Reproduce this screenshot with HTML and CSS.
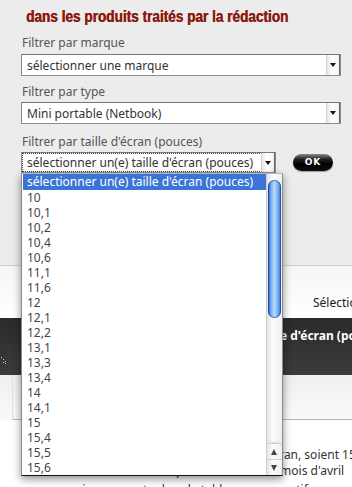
FILE: index.html
```html
<!DOCTYPE html>
<html lang="fr">
<head>
    <meta charset="UTF-8">
    <meta name="viewport" content="width=device-width, initial-scale=1.0">
    <title>Filtrer les produits</title>
    <link rel="stylesheet" href="styles.css">
</head>
<body>
    <div class="page">
        <section class="filters">
            <h2 class="filters-title">dans les produits traités par la rédaction</h2>

            <label class="filter-label label-first">Filtrer par marque</label>
            <div class="select select-wide">
                <span class="select-text">sélectionner une marque</span>
                <span class="select-arrow"></span>
            </div>

            <label class="filter-label">Filtrer par type</label>
            <div class="select select-wide">
                <span class="select-text">Mini portable (Netbook)</span>
                <span class="select-arrow"></span>
            </div>

            <label class="filter-label label-third">Filtrer par taille d'écran (pouces)</label>
            <div class="select-row">
                <div class="select select-short focused">
                    <span class="select-text">sélectionner un(e) taille d'écran (pouces)</span>
                    <span class="select-arrow"></span>
                </div>
                <button class="ok-btn">OK</button>
            </div>
        </section>

        <div class="results-bar"><span>Sélectionner</span></div>

        <div class="table-head">
            <div class="col-first">
                <svg class="grip" width="6" height="7" viewBox="0 0 6 7">
                    <rect x="0" y="0" width="1" height="1" fill="#ccc"/>
                    <rect x="2" y="2" width="1" height="1" fill="#ccc"/>
                    <rect x="4" y="4" width="1" height="1" fill="#ccc"/>
                    <rect x="2" y="5" width="1" height="1" fill="#ccc"/>
                    <rect x="4" y="6" width="1" height="1" fill="#ccc"/>
                </svg>
            </div>
            <div class="col-sep"></div>
            <div class="col-title">Taille d'écran (pouces)</div>
        </div>

        <div class="table-row"><div class="table-cell"></div></div>

        <div class="article">
            <p class="line line-one">Les modèles à plus grand écran, soient 15,6 pouces,</p>
            <p class="line line-two">devraient être disponible à la fin <a href="#">du</a> mois d'avril</p>
            <p class="line line-three">pris en compte dans le tableau comparatif</p>
        </div>

        <!-- liste déroulante ouverte -->
        <div class="dropdown">
            <ul class="dropdown-list">
                <li class="selected">sélectionner un(e) taille d'écran (pouces)</li>
                <li>10</li>
                <li>10,1</li>
                <li>10,2</li>
                <li>10,4</li>
                <li>10,6</li>
                <li>11,1</li>
                <li>11,6</li>
                <li>12</li>
                <li>12,1</li>
                <li>12,2</li>
                <li>13,1</li>
                <li>13,3</li>
                <li>13,4</li>
                <li>14</li>
                <li>14,1</li>
                <li>15</li>
                <li>15,4</li>
                <li>15,5</li>
                <li>15,6</li>
            </ul>
            <div class="scrollbar">
                <div class="scroll-track"><div class="scroll-thumb"></div></div>
                <div class="scroll-btn scroll-up"></div>
                <div class="scroll-btn scroll-down"></div>
            </div>
        </div>
    </div>
</body>
</html>
```
FILE: styles.css
```css
/* global */
* { box-sizing: border-box; }
html, body {
    margin: 0;
    padding: 0;
    background-color: #fff;
    font-family: "Noto Sans", "DejaVu Sans", sans-serif;
    font-size: 12px;
}
.page {
    position: relative;
    width: 352px;
    height: 487px;
    overflow: hidden;
}

/* filter panel */
.filters {
    height: 266px;
    padding: 7px 0 0 21px;
    background-color: #ececec;
    border-bottom: 1px solid #cfcfcf;
}
.filters-title {
    display: inline-block;
    margin: 0 0 0 5px;
    height: 20px;
    line-height: 20px;
    font-family: "Liberation Sans", Arial, sans-serif;
    font-size: 17px;
    font-weight: bold;
    color: #8c1b12;
    white-space: nowrap;
    text-shadow: 0.5px 0 0 #8c1b12;
    transform: scaleX(0.8);
    transform-origin: left center;
}
.filter-label {
    display: block;
    height: 16px;
    line-height: 16px;
    margin: 8px 0 2px 1px;
    color: #555;
    font-size: 12px;
}
.filter-label.label-first { margin-top: 8px; margin-bottom: 3px; }
.filter-label.label-third { margin-top: 10px; }

.select {
    display: flex;
    align-items: center;
    height: 22px;
    background-color: #fff;
    border: 1px solid #8d8d8d;
    border-top-color: #777;
    color: #333;
}
.select-wide { width: 320px; }
.select-short { width: 255px; height: 21px; }
.select-text {
    flex: 1;
    padding-left: 5px;
    white-space: nowrap;
    overflow: hidden;
}
.select.focused .select-text {
    margin: 1px 0 1px 1px;
    padding-left: 4px;
    outline: 1px dotted #444;
    line-height: 17px;
}
.select-arrow {
    position: relative;
    width: 14px;
    height: 100%;
    background: linear-gradient(to right, #e6e6e6, #fff 40%, #f2f2f2);
    border-left: 1px solid #d4d4d4;
    border-right: 1px solid #666;
}
.select-arrow::after {
    content: "";
    position: absolute;
    left: 3px;
    top: 8px;
    border-left: 3px solid transparent;
    border-right: 3px solid transparent;
    border-top: 4px solid #111;
}
.select-row {
    display: flex;
    align-items: flex-start;
    gap: 17px;
}
.ok-btn {
    width: 40px;
    height: 17px;
    margin-top: 2px;
    padding: 0;
    border: none;
    border-radius: 9px;
    background: linear-gradient(#8a8a8a, #222 30%, #000 60%, #111);
    box-shadow: 0 1px 1px rgba(0, 0, 0, 0.35);
    color: #fff;
    font-family: "DejaVu Sans", sans-serif;
    font-size: 9px;
    font-weight: bold;
    letter-spacing: 1px;
    line-height: 17px;
}

/* results area */
.results-bar {
    height: 52px;
    padding: 28px 0 0 313px;
    background: linear-gradient(#f6f6f6, #fff);
    white-space: nowrap;
    color: #222;
    font-size: 12px;
}
.table-head {
    display: flex;
    height: 57px;
    background: linear-gradient(#2b2b2b, #3b3b3b);
}
.col-first {
    position: relative;
    width: 11px;
}
.grip {
    position: absolute;
    left: 1px;
    top: 39px;
}
.col-sep {
    width: 2px;
    background-color: #d6d6d6;
}
.col-title {
    flex: 1;
    padding: 9px 0 0 256px;
    white-space: nowrap;
    color: #fff;
    font-weight: bold;
    font-size: 12px;
}
.table-row {
    height: 45px;
    background: linear-gradient(#efefef, #fafafa);
}
.table-cell {
    height: 45px;
    margin-left: 12px;
    border-left: 1px solid #e2e2e2;
    border-bottom: 1px solid #b5b5b5;
}
.article {
    padding: 27px 0 0 70px;
}
.line {
    margin: 0;
    height: 16px;
    line-height: 16px;
    white-space: nowrap;
    color: #333;
    font-size: 12px;
}
.line-one { text-indent: 50px; }
.line-two { text-indent: 8px; }
.line-three { margin-top: 3px; }
.line a { color: #1f4fa6; text-decoration: none; }

/* open select list */
.dropdown {
    position: absolute;
    left: 21px;
    top: 173px;
    width: 262px;
    height: 303px;
    display: flex;
    background-color: #fff;
    border: 1px solid #8a8a8a;
    border-top-color: #bbb;
    border-bottom-color: #111;
    box-shadow: 0 3px 8px rgba(0, 0, 0, 0.45);
}
.dropdown-list {
    flex: 1;
    margin: 0;
    padding: 0 0 0 1px;
    list-style: none;
    overflow: hidden;
}
.dropdown-list li {
    height: 15px;
    line-height: 15px;
    padding-left: 4px;
    white-space: nowrap;
    color: #47434a;
    font-size: 12px;
}
.dropdown-list li.selected {
    height: 16px;
    line-height: 16px;
    background-color: #3a74d6;
    color: #fff;
}
.scrollbar {
    display: flex;
    flex-direction: column;
    width: 16px;
    background: linear-gradient(to right, #e4e4e4, #fbfbfb 40%, #f0f0f0);
    border-left: 1px solid #cfcfcf;
}
.scroll-track {
    flex: 1;
    padding: 6px 1px 0;
    border-bottom: 1px solid #d8d8d8;
    border-radius: 0 0 8px 8px;
}
.scroll-thumb {
    height: 138px;
    border-radius: 7px;
    background: linear-gradient(to right, #1a56c4, #7fb3f2 25%, #b9dbfb 50%, #6ea6ee 80%, #2c66cc);
    box-shadow: inset 0 0 0 1px rgba(20, 60, 150, 0.6);
}
.scroll-btn {
    position: relative;
    height: 16px;
    border-top: 1px solid #cfcfcf;
}
.scroll-up::after,
.scroll-down::after {
    content: "";
    position: absolute;
    left: 4px;
    border-left: 3px solid transparent;
    border-right: 3px solid transparent;
}
.scroll-up::after {
    top: 5px;
    border-bottom: 6px solid #444;
}
.scroll-down::after {
    top: 5px;
    border-top: 6px solid #444;
}
```
